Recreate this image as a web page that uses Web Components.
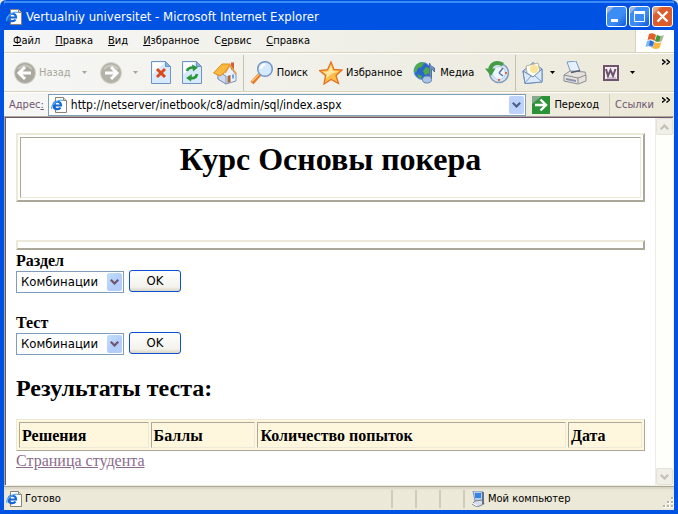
<!DOCTYPE html>
<html lang="ru">
<head>
<meta charset="utf-8">
<title>Vertualniy universitet - Microsoft Internet Explorer</title>
<style>
:root{--ui:"DejaVu Sans Condensed","DejaVu Sans",sans-serif;--face:#ece9d8;--shade:#aca899;--blue:#0052e3;--field:#7f9db9;--plum:#6f5470}
body{margin:0;background:#ece9d8;font:11px/16px "Liberation Sans",sans-serif;color:#000}
</style>
</head>
<body>
<xp-window>
  <title-bar slot="title">Vertualniy universitet - Microsoft Internet Explorer</title-bar>
  <menu-bar slot="bars"></menu-bar>
  <tool-bar slot="bars"></tool-bar>
  <address-bar slot="bars"></address-bar>
  <scroll-pane>
    <course-title>Курс Основы покера</course-title>
    <rule-box></rule-box>
    <topic-picker name="Раздел"></topic-picker>
    <topic-picker name="Тест"></topic-picker>
    <result-list></result-list>
  </scroll-pane>
  <status-bar slot="status">Готово</status-bar>
</xp-window>
<script>
const icons = {
page:[16,16,`<path d="M4.500 .5h8l3 3v12h-11z" fill="#fff" stroke="#8b8378"/><path d="M12.500.5v3h3" fill="#ddd6ca" stroke="#8b8378"/><path d="M2.500 8.500h7.500c0-5-7.500-5-7.500 0 0 4.500 5.500 4.500 7 2" fill="none" stroke="#1467d8" stroke-width="2.200"/><path d="M1 12C-1 8 7 2 12 3.500" fill="none" stroke="#58aef5" stroke-width="1.200"/>`],
flag:[22,20,`<path d="M5 3q4-2 7 1l-1.500 6q-3-3-7-1z" fill="#e0602b"/><path d="M13 4q3 2 7 0l-2 6q-4 2-7 0z" fill="#b4b39c"/><path d="M13 4q2 1 3.500 1l-1 5q-2.500 1-4.500 0z" fill="#3c9c35"/><path d="M3 10q4-2 7 1l-1.500 6q-3-3-7-1z" fill="#84b4f4"/><path d="M6 9.500q2 0 4 1.500l-1 4-4-.5z" fill="#2f6fd8"/><path d="M10.500 11q3 2 7 0l-2 6q-4 2-7 0z" fill="#fdb73e"/>`],
back:[22,22,`<circle cx="11" cy="11" r="10.500" fill="#a9a89e" stroke="#cfcdc3"/><path d="M4 7q7-7 14 0" fill="none" stroke="#c6c5bd" stroke-width="2"/><path d="M17 11H6M11 5l-6 6 6 6" fill="none" stroke="#fff" stroke-width="3"/>`],
forward:[22,22,`<circle cx="11" cy="11" r="10.500" fill="#b3b2a8" stroke="#d3d1c7"/><path d="M4 7q7-7 14 0" fill="none" stroke="#cbcac2" stroke-width="2"/><path d="M5 11h11M11 5l6 6-6 6" fill="none" stroke="#fff" stroke-width="3"/>`],
stop:[20,24,`<path d="M.5.5h14l5 5v17H.5z" fill="#d9eaff" stroke="#6d94c4"/><path d="M1.500 1.500h12l-12 12z" fill="#fff"/><path d="M14.500.5v5h5z" fill="#8cb2e2" stroke="#6d94c4"/><path d="M6 8l8 8M14 8l-8 8" stroke="#dc4a1c" stroke-width="3"/>`],
refresh:[20,24,`<path d="M.5.5h14l5 5v17H.5z" fill="#d9eaff" stroke="#6d94c4"/><path d="M1.500 1.500h12l-12 12z" fill="#fff"/><path d="M14.500.5v5h5z" fill="#8cb2e2" stroke="#6d94c4"/><path d="M5 10q1-4 7-3.500M15 13q-1 5-7 4" fill="none" stroke="#2b963a" stroke-width="2.600"/><path d="M10 3.500l6 3-5 4zM10 13l-6 4 5 3.500z" fill="#2b963a"/>`],
home:[24,24,`<path d="M10 9l6-5 7 10v6l-10 3-8-5v-7z" fill="#eaf1fc" stroke="#8093b8"/><path d="M5 11l8 4v8l-8-5z" fill="#cbdcf4" stroke="#8093b8"/><path d="M18 1.500h3v7h-3z" fill="#d85b35"/><path d="M.5 12L9 3l8 0-6 9-4 3z" fill="#f9b93e" stroke="#dd8c28"/><path d="M12 12l5-8 6.500 9" fill="none" stroke="#e9a23c" stroke-width="1.500"/><path d="M14.500 15l3-1v7l-3 1z" fill="#a76736"/><path d="M19 13.500h2v4h-2z" fill="#6aa5e6"/>`],
search:[24,24,`<path d="M10 13l-8 9" stroke="#e8782a" stroke-width="4"/><path d="M9.500 12.500L2 20.500" stroke="#ffc26e" stroke-width="1.500"/><circle cx="15" cy="8" r="7.300" fill="#d5e9ff" stroke="#7595c9" stroke-width="1.500"/><path d="M10.500 8q1-4 5-4.500" stroke="#fff" stroke-width="2.500" fill="none"/>`],
star:[24,24,`<path d="M12 1l3 7.500 8 .5-6 5.500 2.500 8-7.500-4-7 4.500 1.500-8.500-6-5 8-.8z" fill="#fcbd48" stroke="#de721f" stroke-width="1.300"/><path d="M12 4l2 6 5 .5-6 2-6 5 1-4-4-2.500 5-.5z" fill="#ffe8a5"/>`],
media:[24,24,`<circle cx="9.500" cy="10" r="8.500" fill="#2c65ce" stroke="#6694d9"/><path d="M3 4q4-4 8-2l-2 4-4 1-2 5-2-2zM13 6l5 2-1 4-5 2-2-4zM4 13l5 2-1 3q-3-1-4-5" fill="#4cad45"/><path d="M16.500 17V2q0 3 5 5v4q-2-3-3-3v10" fill="#7492c4" stroke="#526fa5"/><ellipse cx="14" cy="18.500" rx="4.500" ry="3.500" fill="#a9c4e5" stroke="#6484b4"/>`],
history:[24,24,`<circle cx="14" cy="12" r="9.500" fill="#d8e7f6" stroke="#829bbb" stroke-width="1.500"/><circle cx="14" cy="12" r="6.500" fill="#edf5fd" stroke="#b4c9e0"/><path d="M14 12l4-5M14 12l4 3" stroke="#5f779b" stroke-width="1.500"/><path d="M20 12h2M14 18v2" stroke="#dc6a38" stroke-width="2"/><path d="M18 3.500Q8-1 5 8" fill="none" stroke="#469c45" stroke-width="4"/><path d="M0 7.500h10.500L6 15z" fill="#469c45"/>`],
mail:[22,24,`<path d="M1 10L11 1.500 20 8v13l-17 1.500z" fill="#b8d4f4" stroke="#6689b8"/><path d="M4 5l12-3 2 9-7 5-6-4z" fill="#fffdf1" stroke="#b6b39f"/><circle cx="12" cy="8" r="4" fill="#fbe397"/><path d="M1 10l10 6 9-8v13l-17 1.500z" fill="#dceafd" stroke="#6689b8"/><path d="M3 22l6-7M20 21l-7-6" stroke="#7898c6"/>`],
print:[24,24,`<path d="M4 1l9-1 4 10-9 2z" fill="#e6f1ff" stroke="#7797c4"/><path d="M1 14l6-4 15 1 1 4v5l-8 3-14-3z" fill="#e6e3dc" stroke="#8a8b93"/><path d="M1 14l14 3 8-3M15 17v5" fill="none" stroke="#8a8b93"/><path d="M3 17l10 2v2L3 19z" fill="#8a92ae"/><path d="M8 11.500l9-2" stroke="#595b6a" stroke-width="1.500"/>`],
word:[16,16,`<path d="M1 1h14v14H1z" fill="#f3eef1" stroke="#6f5470" stroke-width="2"/><path d="M3 4l2 7 2.500-6L10 11l2.500-7" fill="none" stroke="#6f5470" stroke-width="2"/><path d="M4 13h9" stroke="#a595a6"/>`],
go:[18,18,`<path d="M0 0h18v18H0z" fill="#2c9238"/><path d="M0 0h10L0 8z" fill="#85a98a"/><path d="M3 9h10M8.500 3.500L14 9l-5.500 5.500" stroke="#fff" stroke-width="2.400" fill="none"/>`],
chev:[8,7,`<path d="M0 .5L3 3 0 5.500M4.500.5l3 2.500-3 2.500" fill="none" stroke="#000" stroke-width="1.500"/>`],
caret:[5,3,`<path d="M0 0h5L2.500 3z" fill="currentColor"/>`],
down:[9,6,`<path d="M.8.8l3.700 3.700L8.200.8" fill="none" stroke="currentColor" stroke-width="2.200"/>`],
up:[9,6,`<path d="M.8 5.200l3.700-3.700 3.700 3.700" fill="none" stroke="currentColor" stroke-width="2.200"/>`],
computer:[14,16,`<path d="M2 0h9l1 9-8 1z" fill="#b8ccec" stroke="#7f95ba"/><path d="M4 2h6v5H4z" fill="#3683e6"/><path d="M4 10l8-1 1 4-7 3-5-3z" fill="#d8deea" stroke="#7c8494"/><path d="M1 12l5 3" stroke="#fff"/><path d="M11 1h2v12h-2z" fill="#686f88"/>`],
grip:[11,11,`<path d="M8 0h3v3H8zM4 4h3v3H4zM8 4h3v3H8zM0 8h3v3H0zM4 8h3v3H4zM8 8h3v3H8z" fill="#fff"/><path d="M8 0h2v2H8zM4 4h2v2H4zM8 4h2v2H8zM0 8h2v2H0zM4 8h2v2H4zM8 8h2v2H8z" fill="#b8b4a2"/>`],
min:[21,21,`<path d="M5 13h7v3H5z" fill="#fff"/>`],
max:[21,21,`<path d="M5.500 7v8.500h10V6.500h-10" fill="none" stroke="#fff"/><path d="M5 5h11v3H5z" fill="#fff"/>`],
close:[21,21,`<path d="M5.500 5.500l10 10M15.500 5.500l-10 10" stroke="#fff" stroke-width="2.400"/>`]
};
const svg = n => `<svg width="${icons[n][0]}" height="${icons[n][1]}" viewBox="0 0 ${icons[n][0]} ${icons[n][1]}" aria-hidden="true">${icons[n][2]}</svg>`;
const base = `<style>:host,*{box-sizing:border-box}svg{display:block;flex:none}button{font:inherit;color:inherit;background:none;border:0;padding:0;margin:0;display:flex;align-items:center;white-space:nowrap}</style>`;
const define = (tag, html) => customElements.define(tag, class extends HTMLElement {
  constructor(){
    super();
    this.attachShadow({mode:'open'}).innerHTML = base + (typeof html === 'function' ? html(this) : html);
  }
});

define('xp-window', `<style>
:host{display:flex;flex-direction:column;min-height:100vh;border:solid var(--blue);border-width:0 4px 4px;background:var(--face);border-radius:6px 6px 0 0;overflow:hidden;font:11px/16px var(--ui)}
.bars{background:linear-gradient(90deg,#f6f6f5,#efeee5 60%,#ece9d8)}
</style><slot name="title"></slot><div class="bars"><slot name="bars"></slot></div><slot></slot><slot name="status"></slot>`);

define('title-bar', `<style>
:host{display:flex;align-items:center;height:30px;padding:3px 2px 0 3px;margin:0 -1px;background:linear-gradient(var(--blue) 1px,#3b8cf4 1px 3px,var(--blue) 3px);color:#fff;font-size:13px}
span{flex:1;margin-left:4px;white-space:nowrap}
div{display:flex;gap:2px}
button{width:21px;height:21px;border:1px solid #fff;border-radius:3px;background:linear-gradient(135deg,#9ab3dc 15%,#3c8cf5 20% 60%,#1258d8);justify-content:center}
.x{background:linear-gradient(135deg,#e2a47c 15%,#dd5c2c 25%)}
</style>${svg('page')}<span><slot></slot></span><div><button aria-label="Свернуть">${svg('min')}</button><button aria-label="Развернуть">${svg('max')}</button><button class="x" aria-label="Закрыть">${svg('close')}</button></div>`);

define('menu-bar', `<style>
:host{display:flex;height:23px;border-bottom:1px solid #d8d2bd}
nav{flex:1;display:flex;gap:15px;padding-left:9px}
.logo{width:39px;background:#fff;border-left:1px solid #d8d2bd;display:grid;place-items:center}
</style><nav>${['Файл','Правка','Вид','Избранное','Сервис','Справка'].map(t=>{const k=t==='Сервис'?1:0;return `<button><span>${t.slice(0,k)}<u>${t[k]}</u>${t.slice(k+1)}</span></button>`}).join('')}</nav><div class="logo">${svg('flag')}</div>`);

define('tool-bar', `<style>
:host{display:flex;align-items:center;height:39px;padding:0 4px 0 10px;border-top:1px solid #fff;border-bottom:1px solid #d8d2bd}
button{gap:3px}
.dim{color:#a7a598}.drop{width:5px;margin:0 13px 0 11px}
.near{margin:0 8px 0 6px}
.g{margin-right:11px}.wide{margin-right:16px}
hr{width:1px;height:36px;border:0;margin:0 6px;background:#c5c2b2}
.more{margin-left:auto;align-self:flex-start;padding-top:5px}
</style><button class="dim">${svg('back')}Назад</button><button class="dim drop" aria-label="История назад">${svg('caret')}</button><button aria-label="Вперед">${svg('forward')}</button><button class="dim drop" aria-label="История вперед">${svg('caret')}</button><button class="g" aria-label="Остановить">${svg('stop')}</button><button class="g" aria-label="Обновить">${svg('refresh')}</button><button aria-label="Домой">${svg('home')}</button><hr><button class="g">${svg('search')}Поиск</button><button class="g">${svg('star')}Избранное</button><button class="g">${svg('media')}Медиа</button><button aria-label="Журнал">${svg('history')}</button><hr><button aria-label="Почта">${svg('mail')}</button><button class="drop near" aria-label="Выбор почты">${svg('caret')}</button><button class="wide" aria-label="Печать">${svg('print')}</button><button aria-label="Правка в Word">${svg('word')}</button><button class="drop" aria-label="Выбор редактора">${svg('caret')}</button><button class="more" aria-label="Еще">${svg('chev')}</button>`);

define('address-bar', `<style>
:host{display:flex;align-items:center;height:24px;padding:0 4px 0 5px;border-top:1px solid #fff;white-space:nowrap}
label{color:var(--plum);margin-right:4px}
.field{flex:1;display:flex;align-items:center;height:22px;border:1px solid var(--field);background:#fff;padding:0 1px 0 2px}
input{flex:1;min-width:0;border:0;padding:0 0 0 4px;outline:0;background:none;font:12px/18px var(--ui)}
.drop{width:15px;height:18px;justify-content:center;background:#bdd3fb;color:#4d6185;border-radius:2px}
.go{gap:4px;margin:0 10px 0 6px}
.links{height:22px;border-left:1px solid #d0ccba;padding-left:5px;color:var(--plum);margin-right:8px}
.more{align-self:flex-start;padding-top:4px}
</style><label for="url">Адрес<u>:</u></label><div class="field">${svg('page')}<input id="url" value="http://netserver/inetbook/c8/admin/sql/index.aspx"><button class="drop" aria-label="Список адресов">${svg('down')}</button></div><button class="go">${svg('go')}Переход</button><button class="links">Ссылки</button><button class="more" aria-label="Еще">${svg('chev')}</button>`);

define('scroll-pane', `<style>
:host{flex:1;display:flex;background:#fff;border:1px solid var(--shade);border-bottom-color:#f1efe2;border-right-color:#f1efe2}
.in{flex:1;display:flex;border:solid var(--plum);border-width:1px 0 0 1px}
main{flex:1;padding:15px 10px 0;font:16px/19px "Liberation Serif",serif}
aside{width:18px;border-left:1px solid #eeede5;background:#fefefb;display:flex;flex-direction:column;justify-content:space-between}
button{height:17px;justify-content:center;background:#f1f0e8;border:1px solid #e4e2d6;border-radius:2px;color:#c3c1b4}
</style><div class="in"><main><slot></slot></main><aside><button aria-label="Вверх">${svg('up')}</button><button aria-label="Вниз">${svg('down')}</button></aside></div>`);

define('course-title', `<style>
:host{display:block;border:2px solid;border-color:var(--face) var(--shade) var(--shade) var(--face);padding:2px}
div{border:1px solid;border-color:var(--shade) var(--face) var(--face) var(--shade);padding:3px 0 19px}
h1{margin:0;font-size:32px;line-height:37px;text-align:center}
</style><div><h1><slot></slot></h1></div>`);

define('rule-box', `<style>:host{display:block;height:10px;margin:38px 0 1px;border:2px solid;border-color:var(--face) var(--shade) var(--shade) var(--face)}</style>`);

define('topic-picker', el => `<style>
:host{display:block;margin-bottom:20px}
label{display:block;font-weight:bold;height:19px}
.row{display:flex;gap:5px;font:13px/18px var(--ui)}
.sel{display:grid;width:108px;height:22px;margin-top:1px;border:1px solid var(--field)}
select{grid-area:1/1;appearance:none;border:0;background:#fff;font:inherit;color:#000;padding:0 0 0 4px;border-radius:0}
i{grid-area:1/1;justify-self:end;align-self:center;width:15px;height:18px;margin-right:1px;background:linear-gradient(135deg,#bfe0fc,#b4ccf9 60%);border-radius:2px;display:grid;place-items:center;color:var(--plum);pointer-events:none}
.ok{width:52px;height:22px;justify-content:center;border:1px solid #0a50d0;border-radius:3px;background:linear-gradient(#fff,#f3f2ec 80%,#d9d4c4)}
</style><label for="s">${el.getAttribute('name')}</label><div class="row"><span class="sel"><select id="s"><option>Комбинации</option></select><i>${svg('down')}</i></span><button class="ok">OK</button></div>`);

define('result-list', `<style>
:host{display:block}
h2{margin:0 0 18px;font-size:24px;line-height:26px}
table{width:100%;table-layout:fixed;border-spacing:2px;background:#fff7dd;border:1px solid;border-color:var(--face) var(--shade) var(--shade) var(--face)}
th{border:1px solid;border-color:var(--shade) var(--face) var(--face) var(--shade);padding:3px 2px 2px;text-align:left;font-size:16px;line-height:19px;white-space:nowrap}
.a{width:21%}.b{width:17%}.d{width:12%}
a{color:#8a6b8c}
</style><h2>Результаты теста:</h2><table><thead><tr><th class="a">Решения</th><th class="b">Баллы</th><th>Количество попыток</th><th class="d">Дата</th></tr></thead></table><a href="#">Страница студента</a>`);

define('status-bar', `<style>
:host{display:flex;align-items:center;height:24px;border-top:1px solid var(--shade);box-shadow:inset 0 2px 2px #d8d5c5;padding-left:2px}
.t{flex:1;margin-left:3px}
i{width:24px;height:18px;border-left:2px solid;border-image:linear-gradient(90deg,#cfccba 50%,#fff 50%) 2}
.zone{display:flex;align-items:center;width:211px;height:18px;border-left:2px solid;border-image:linear-gradient(90deg,#cfccba 50%,#fff 50%) 2;padding-left:6px;gap:3px}
.zone svg:last-child{margin-left:auto;align-self:flex-end}
</style>${svg('page')}<span class="t"><slot></slot></span><i></i><i></i><i></i><div class="zone">${svg('computer')}<span>Мой компьютер</span>${svg('grip')}</div>`);
</script>
</body>
</html>
